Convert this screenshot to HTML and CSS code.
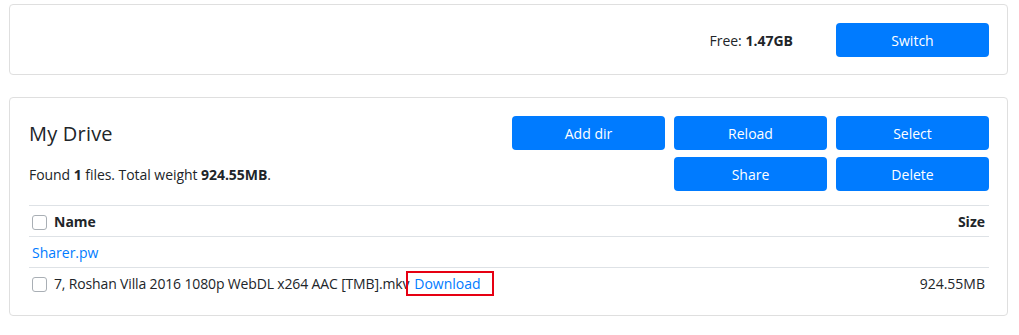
FILE: index.html
```html
<!DOCTYPE html>
<html lang="en">
<head>
    <meta charset="UTF-8">
    <meta name="viewport" content="width=device-width, initial-scale=1.0">
    <title>My Drive</title>
    <link rel="stylesheet" href="styles.css">
</head>
<body>
    <div class="card top-card">
        <span class="free">Free: <b>1.47GB</b></span>
        <button class="btn btn-switch">Switch</button>
    </div>

    <div class="card drive-card">
        <div class="drive-head">
            <h2 class="drive-title">My Drive</h2>
            <button class="btn">Add dir</button>
            <button class="btn">Reload</button>
            <button class="btn">Select</button>
            <div class="drive-info">Found <b>1</b> files. Total weight <b>924.55MB</b>.</div>
            <button class="btn btn-share">Share</button>
            <button class="btn">Delete</button>
        </div>

        <table class="files">
            <thead>
                <tr>
                    <th><span class="check"></span>Name</th>
                    <th class="size">Size</th>
                </tr>
            </thead>
            <tbody>
                <tr>
                    <td colspan="2"><a href="#" class="link">Sharer.pw</a></td>
                </tr>
                <tr>
                    <td><span class="check"></span><span class="file-name">7, Roshan Villa 2016 1080p WebDL x264 AAC [TMB].mkv</span><a href="#" class="link download">Download</a></td>
                    <td class="size">924.55MB</td>
                </tr>
            </tbody>
        </table>
    </div>
</body>
</html>
```

FILE: styles.css
```css
body {
    font-family: "Open Sans", "Noto Sans", Arial, sans-serif;
    font-size: 14px;
    color: #212529;
    margin: 0;
    padding: 4px 11px 0 9px;
    background-color: #fff;
}
.card {
    border: 1px solid #dfdfdf;
    border-radius: 4px;
    background-color: #fff;
}
.top-card {
    display: flex;
    justify-content: flex-end;
    align-items: center;
    gap: 43px;
    padding: 18px 18px 17px 19px;
}
.free b {
    font-weight: 700;
}
.btn {
    height: 34px;
    border: none;
    border-radius: 4px;
    background-color: #007bff;
    color: #fff;
    font-family: inherit;
    font-size: 14px;
    padding: 0;
    cursor: pointer;
}
.btn-switch {
    width: 153px;
}
.drive-card {
    margin-top: 22px;
    padding: 18px 18px 17px 19px;
}
.drive-head {
    display: grid;
    grid-template-columns: 1fr 153px 153px 153px;
    column-gap: 9px;
    row-gap: 7px;
    align-items: center;
    padding-bottom: 14px;
}
.drive-title {
    margin: 0;
    font-size: 20px;
    font-weight: 500;
    letter-spacing: 0.2px;
}
.drive-info {
    grid-column: 1 / 3;
    letter-spacing: -0.05px;
}
.btn-share {
    grid-column: 3;
}
.files {
    width: 100%;
    border-collapse: collapse;
    border-top: 1px solid #dee2e6;
}
.files th, .files td {
    padding: 0 4px 0 3px;
    height: 30px;
    text-align: left;
    vertical-align: middle;
    border-bottom: 1px solid #dee2e6;
}
.files tbody tr:last-child td {
    border-bottom: none;
}
.files th {
    font-weight: 700;
}
.files .size {
    text-align: right;
}
.check {
    display: inline-block;
    width: 13px;
    height: 13px;
    border: 1px solid #a9afb5;
    border-radius: 3px;
    vertical-align: -3px;
    margin-right: 7px;
}
.file-name {
    letter-spacing: -0.15px;
}
.link {
    color: #007bff;
    text-decoration: none;
}
.download {
    display: inline-block;
    padding: 1px 11px 1px 6px;
    border: 2px solid #e60012;
    margin-left: -3px;
}
```
